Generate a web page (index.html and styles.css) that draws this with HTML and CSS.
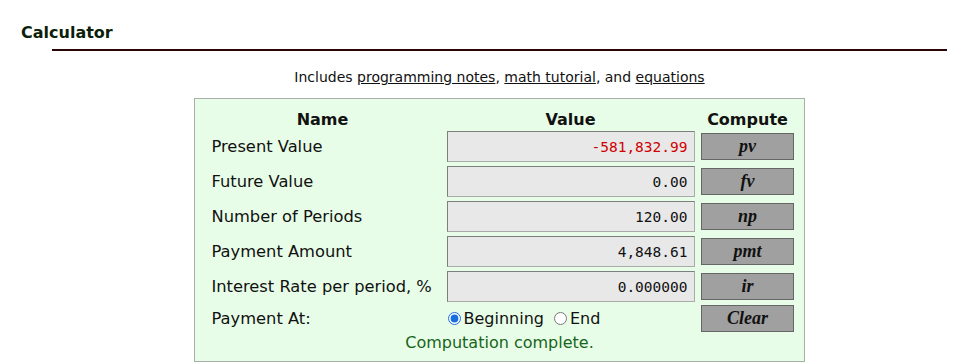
FILE: index.html
```html
<!DOCTYPE html>
<html lang="en">
<head>
    <meta charset="UTF-8">
    <title>Calculator</title>
    <link rel="stylesheet" href="styles.css">
</head>
<body>
    <h2 class="page-title">Calculator</h2>

    <div class="content">
        <hr class="title-rule">

        <p class="intro">
            Includes <a href="#notes">programming notes</a>, <a href="#tutorial">math tutorial</a>, and <a href="#equations">equations</a>
        </p>

        <!-- Time value of money calculator -->
        <form class="calc" onsubmit="return false;">
            <div class="calc-grid">
                <div class="col-head">Name</div>
                <div class="col-head">Value</div>
                <div class="col-head">Compute</div>

                <label class="calc-label" for="pv">Present Value</label>
                <input class="calc-input negative" id="pv" type="text" value="-581,832.99">
                <button class="calc-btn" type="button">pv</button>

                <label class="calc-label" for="fv">Future Value</label>
                <input class="calc-input" id="fv" type="text" value="0.00">
                <button class="calc-btn" type="button">fv</button>

                <label class="calc-label" for="np">Number of Periods</label>
                <input class="calc-input" id="np" type="text" value="120.00">
                <button class="calc-btn" type="button">np</button>

                <label class="calc-label" for="pmt">Payment Amount</label>
                <input class="calc-input" id="pmt" type="text" value="4,848.61">
                <button class="calc-btn" type="button">pmt</button>

                <label class="calc-label" for="ir">Interest Rate per period, %</label>
                <input class="calc-input" id="ir" type="text" value="0.000000">
                <button class="calc-btn" type="button">ir</button>

                <div class="calc-label">Payment At:</div>
                <div class="pay-at">
                    <label class="radio"><input type="radio" name="when" checked>Beginning</label>
                    <label class="radio"><input type="radio" name="when">End</label>
                </div>
                <button class="calc-btn" type="reset">Clear</button>
            </div>
            <div class="status">Computation complete.</div>
        </form>
    </div>
</body>
</html>
```

FILE: styles.css
```css
body {
    margin: 0;
    font-family: "DejaVu Sans", Verdana, sans-serif;
    color: #111;
    background: #fff;
}

.page-title {
    margin: 0;
    padding: 23px 0 0 21px;
    font-size: 16px;
    font-weight: bold;
    color: #0b1f0b;
}

.content {
    margin: 0 23px 0 52px;
}

.title-rule {
    margin: 7px 0 0;
    border: none;
    border-top: 2px solid #2a0505;
}

.intro {
    margin: 18px 0 0;
    text-align: center;
    font-size: 14px;
}

.intro a {
    color: #111;
}

/* Calculator box */
.calc {
    width: 609px;
    margin: 13px auto 0;
    background: #e8fde8;
    border: 1px solid #a8b0a8;
}

.calc-grid {
    display: grid;
    grid-template-columns: 246px 250px 104px;
    grid-template-rows: 30px repeat(5, 35px) 28px;
    justify-content: center;
    align-items: center;
}

.col-head {
    align-self: end;
    text-align: center;
    font-weight: bold;
    font-size: 16px;
    line-height: 18px;
}

.calc-label {
    padding-left: 12px;
    font-size: 16.3px;
}

.calc-input {
    box-sizing: border-box;
    width: 248px;
    height: 31px;
    margin: 0 1px;
    padding: 0 6px;
    border: 1px solid #7c807c;
    border-right-color: #a8aca8;
    border-bottom-color: #a8aca8;
    background: #e8e8e8;
    font-family: "DejaVu Sans Mono", monospace;
    font-size: 14.5px;
    text-align: right;
    color: #111;
}

.calc-input.negative {
    color: #d00000;
}

.calc-btn {
    box-sizing: border-box;
    justify-self: center;
    width: 93px;
    height: 27px;
    padding: 0;
    border: 1px solid #666;
    background: #a0a0a0;
    font-family: "Liberation Serif", "Times New Roman", serif;
    font-style: italic;
    font-weight: bold;
    font-size: 18px;
    color: #111;
}

.pay-at {
    display: flex;
    align-items: center;
    gap: 8px;
    font-size: 16px;
}

.radio {
    display: flex;
    align-items: center;
}

.radio input {
    width: 13px;
    height: 13px;
    margin: 0 3px 0 2px;
    accent-color: #1a6fe0;
}

.status {
    padding-bottom: 7px;
    text-align: center;
    font-size: 16px;
    line-height: 22px;
    color: #17651a;
}
```
